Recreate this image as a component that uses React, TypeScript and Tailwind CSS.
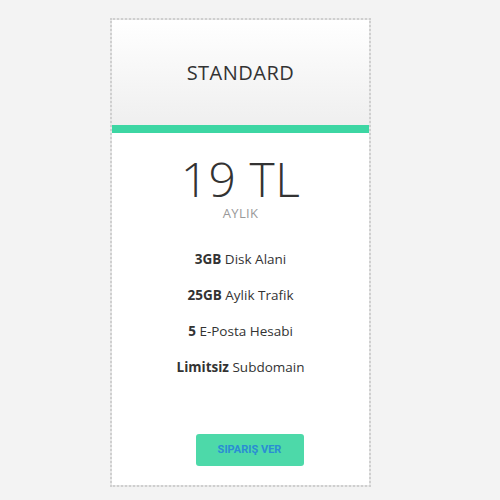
export default function App() {
  const features: [string, string][] = [
    ['3GB', 'Disk Alani'],
    ['25GB', 'Aylik Trafik'],
    ['5', 'E-Posta Hesabi'],
    ['Limitsiz', 'Subdomain'],
  ]

  return (
    <div className="h-[500px] w-[500px] bg-[#f3f3f3] pt-[18px] pl-[110px] font-['Open_Sans',sans-serif] text-[#333]">
      <div className="w-[261px] border-2 border-dotted border-[#cfcfcf] bg-[#e9e9e9]">
        <div className="bg-white">
          <div className="flex h-[105px] items-center justify-center bg-gradient-to-b from-white to-[#efefef]">
            <h2 className="text-[20px] tracking-[0.5px] text-[#333]">STANDARD</h2>
          </div>
          <div className="h-2 bg-[#3dd6a3]" />
          <div className="flex flex-col items-center pt-[21px] pb-[19px]">
            <div className="text-[48px] leading-[50px] font-light tracking-[0.5px] text-[#333]">19 TL</div>
            <div className="mt-px text-[13px] leading-4 tracking-[0.3px] text-[#999]">AYLIK</div>
            <ul className="mt-[29px] flex flex-col gap-[18px] text-[13.5px] leading-[18px]">
              {features.map(([b, t]) => (
                <li key={t} className="text-center">
                  <span className="font-bold">{b}</span> {t}
                </li>
              ))}
            </ul>
            <button className="mt-[58px] ml-[18px] h-8 w-[108px] rounded-[3px] bg-[#4dd9a9] font-['Roboto',sans-serif] text-[11px] font-bold text-[#2a8dd4]">
              SIPARIŞ VER
            </button>
          </div>
        </div>
      </div>
    </div>
  )
}
